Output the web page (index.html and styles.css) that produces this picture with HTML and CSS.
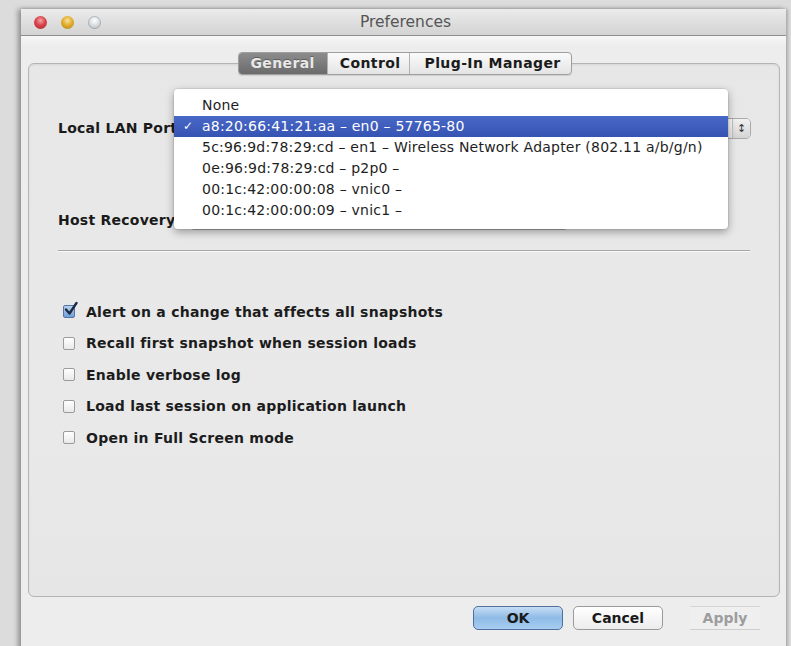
FILE: index.html
```html
<!DOCTYPE html>
<html lang="en">
<head>
<meta charset="utf-8">
<title>Preferences</title>
<link rel="stylesheet" href="styles.css">
</head>
<body>
<div class="window">
  <header class="titlebar">
    <div class="lights">
      <span class="light close"></span>
      <span class="light minimize"></span>
      <span class="light zoom"></span>
    </div>
    <div class="title">Preferences</div>
    <div class="spacer"></div>
  </header>

  <main class="content">
    <nav class="tabs">
      <span class="tab active">General</span>
      <span class="tab">Control</span>
      <span class="tab">Plug-In Manager</span>
    </nav>

    <section class="tabbox">
      <div class="field-row first">
        <span class="label">Local LAN Port:</span>
        <span class="popup"><span class="popup-arrows">&#x2195;</span></span>
      </div>
      <div class="field-row second">
        <span class="label">Host Recovery:</span>
        <span class="popup short"></span>
      </div>

      <hr class="separator">

      <ul class="options">
        <li class="option"><span class="checkbox checked"><svg viewBox="0 0 16 16" width="16" height="16"><path d="M3 8.5 L6.5 12.5 L13.5 2" fill="none" stroke="#1d2b44" stroke-width="2.4" stroke-linecap="round" stroke-linejoin="round"/></svg></span>Alert on a change that affects all snapshots</li>
        <li class="option"><span class="checkbox"></span>Recall first snapshot when session loads</li>
        <li class="option"><span class="checkbox"></span>Enable verbose log</li>
        <li class="option"><span class="checkbox"></span>Load last session on application launch</li>
        <li class="option"><span class="checkbox"></span>Open in Full Screen mode</li>
      </ul>

      <ul class="menu">
        <li class="menu-item">None</li>
        <li class="menu-item selected"><span class="check">&#x2713;</span>a8:20:66:41:21:aa &#x2013; en0 &#x2013; 57765-80</li>
        <li class="menu-item">5c:96:9d:78:29:cd &#x2013; en1 &#x2013; Wireless Network Adapter (802.11 a/b/g/n)</li>
        <li class="menu-item">0e:96:9d:78:29:cd &#x2013; p2p0 &#x2013;</li>
        <li class="menu-item">00:1c:42:00:00:08 &#x2013; vnic0 &#x2013;</li>
        <li class="menu-item">00:1c:42:00:00:09 &#x2013; vnic1 &#x2013;</li>
      </ul>
    </section>

    <footer class="buttons">
      <button class="btn default">OK</button>
      <button class="btn">Cancel</button>
      <button class="btn disabled">Apply</button>
    </footer>
  </main>
</div>
</body>
</html>
```

FILE: styles.css
```css
* { box-sizing: border-box; }

html, body {
  margin: 0;
  height: 100%;
}

body {
  background: #dcdcdc;
  padding: 9px 5px 0 21px;
  font-family: "DejaVu Sans", "Noto Sans", sans-serif;
  color: #1a1a1a;
  overflow: hidden;
}

.window {
  width: 765px;
  height: 650px;
  background: #ededed;
  display: flex;
  flex-direction: column;
  box-shadow: -3px 0 5px rgba(0, 0, 0, 0.35), 2px 0 3px rgba(0, 0, 0, 0.2);
}

/* title bar */
.titlebar {
  height: 27px;
  flex: none;
  display: grid;
  grid-template-columns: 1fr auto 1fr;
  align-items: center;
  background: linear-gradient(#ebebeb, #d3d3d3);
  border-bottom: 1px solid #8e8e8e;
}

.lights {
  display: flex;
  gap: 14px;
  padding-left: 13px;
}

.light {
  width: 13px;
  height: 13px;
  border-radius: 50%;
}

.light.close {
  background: radial-gradient(circle at 50% 35%, #f3a3a6 0, #d9434a 45%, #a9262e 100%);
}

.light.minimize {
  background: radial-gradient(circle at 50% 35%, #f8e2a0 0, #e3ae2c 45%, #b07f12 100%);
}

.light.zoom {
  background: radial-gradient(circle at 50% 35%, #ffffff 0, #d6dadd 50%, #a8adb2 100%);
  box-shadow: inset 0 0 0 1px rgba(120, 130, 140, 0.4);
}

.title {
  font-size: 15.5px;
  color: #555;
  padding-left: 4px;
}

/* main area */
.content {
  flex: 1;
  display: flex;
  flex-direction: column;
  padding: 16px 6px 0 7px;
  background: linear-gradient(#f7f7f7 0, #ededed 10px);
}

.tabs {
  align-self: center;
  display: flex;
  position: relative;
  z-index: 2;
  margin-bottom: -12px;
  margin-left: 2px;
  border: 1px solid #9e9e9e;
  border-radius: 4px;
  background: linear-gradient(#fbfbfb, #e4e4e4);
  box-shadow: 0 1px 1px rgba(0, 0, 0, 0.1);
  height: 23px;
}

.tab {
  font-size: 14px;
  font-weight: bold;
  letter-spacing: 0.4px;
  line-height: 21px;
  color: #1b1b1b;
  border-left: 1px solid #b2b2b2;
}

.tab:first-child { border-left: none; border-radius: 3px 0 0 3px; }

.tab.active {
  background: linear-gradient(#8c8c8c, #6b6b6b);
  color: #e8e8e8;
  padding: 0 12px 0 11px;
  text-shadow: 0 -1px 0 rgba(0, 0, 0, 0.3);
}

.tabs .tab:nth-child(2) { padding: 0 9px 0 12px; }
.tabs .tab:nth-child(3) { padding: 0 10px 0 14px; }

.tabbox {
  position: relative;
  height: 534px;
  border: 1px solid #b4b4b4;
  border-radius: 6px;
  background: linear-gradient(#e7e7e7, #e9e9ea 70%, #e6e6e6);
  box-shadow: inset 0 1px 2px rgba(0, 0, 0, 0.08);
  padding: 0 29px 0 29px;
  display: flex;
  flex-direction: column;
}

.field-row {
  display: flex;
  align-items: center;
  height: 22px;
}

.field-row.first { margin-top: 53px; }
.field-row.second { margin-top: 70px; }

.label {
  flex: none;
  font-size: 14px;
  font-weight: bold;
  letter-spacing: 0.25px;
  white-space: nowrap;
  margin-right: 8px;
}

.popup {
  flex: 1;
  height: 21px;
  margin-right: -1px;
  border: 1px solid #a9a9a9;
  border-radius: 5px;
  background: linear-gradient(#fdfdfd, #e6e6e6);
  display: flex;
  justify-content: flex-end;
  align-items: center;
}

.popup.short {
  flex: none;
  width: 380px;
  height: 20px;
}

.popup-arrows {
  width: 18px;
  height: 19px;
  border-left: 1px solid #c2c2c2;
  font-size: 11px;
  line-height: 19px;
  text-align: center;
  color: #333;
  background: linear-gradient(#f1f1f1, #d4d4d4);
  border-radius: 0 4px 4px 0;
}

.separator {
  margin: 19px 0 0 0;
  border: none;
  border-top: 1px solid #a5a5a5;
  border-bottom: 1px solid #fafafa;
  height: 0;
}

.options {
  list-style: none;
  margin: 44px 0 0 0;
  padding: 0 0 0 5px;
  display: flex;
  flex-direction: column;
}

.option {
  display: flex;
  align-items: center;
  height: 31.5px;
  font-size: 14px;
  font-weight: bold;
  letter-spacing: 0.25px;
  color: #1c1c1c;
}

.checkbox {
  width: 12px;
  height: 13px;
  flex: none;
  margin-right: 11px;
  border: 1px solid #9b9b9b;
  border-radius: 2px;
  background: linear-gradient(#ffffff, #e9e9e9);
  display: flex;
  align-items: center;
  justify-content: center;
  overflow: visible;
}

.checkbox.checked {
  border-color: #5575a6;
  background: linear-gradient(#b9d2ef, #6f9fd8);
}

.checkbox.checked svg {
  flex: none;
  margin-top: -5px;
  margin-left: 4px;
}

/* open popup menu over the first popup */
.menu {
  position: absolute;
  left: 145px;
  top: 25px;
  width: 554px;
  height: 140px;
  margin: 0;
  padding: 6px 0 0 0;
  list-style: none;
  background: #ffffff;
  border-radius: 4px;
  box-shadow: 0 3px 9px rgba(0, 0, 0, 0.35), 0 0 0 1px rgba(0, 0, 0, 0.06);
  z-index: 3;
}

.menu-item {
  position: relative;
  height: 21px;
  line-height: 21px;
  padding-left: 28px;
  font-size: 14px;
  letter-spacing: 0.22px;
  color: #1e1e1e;
  white-space: nowrap;
}

.menu-item.selected {
  background: linear-gradient(#4868c6, #3553b3);
  color: #ffffff;
}

.check {
  position: absolute;
  left: 9px;
  font-size: 12px;
}

/* dialog buttons */
.buttons {
  display: flex;
  justify-content: flex-end;
  padding: 9px 20px 0 0;
  gap: 10px;
}

.btn {
  height: 24px;
  width: 90px;
  font-family: inherit;
  font-size: 14px;
  font-weight: bold;
  color: #1a1a1a;
  border: 1px solid #9a9a9a;
  border-radius: 5px;
  background: linear-gradient(#ffffff, #ececec);
  padding: 0;
}

.btn.default {
  margin-left: 2px;
  border-color: #50709e;
  background: linear-gradient(#c7ddf4, #8ebbe6 50%, #a8cdf0);
}

.btn.disabled {
  width: 70px;
  margin-left: 17px;
  color: #9d9d9d;
  border: none;
  border-top: 1px solid #d6d6d6;
  border-bottom: 1px solid #cfcfcf;
  border-radius: 0;
  background: #efefef;
}
```
